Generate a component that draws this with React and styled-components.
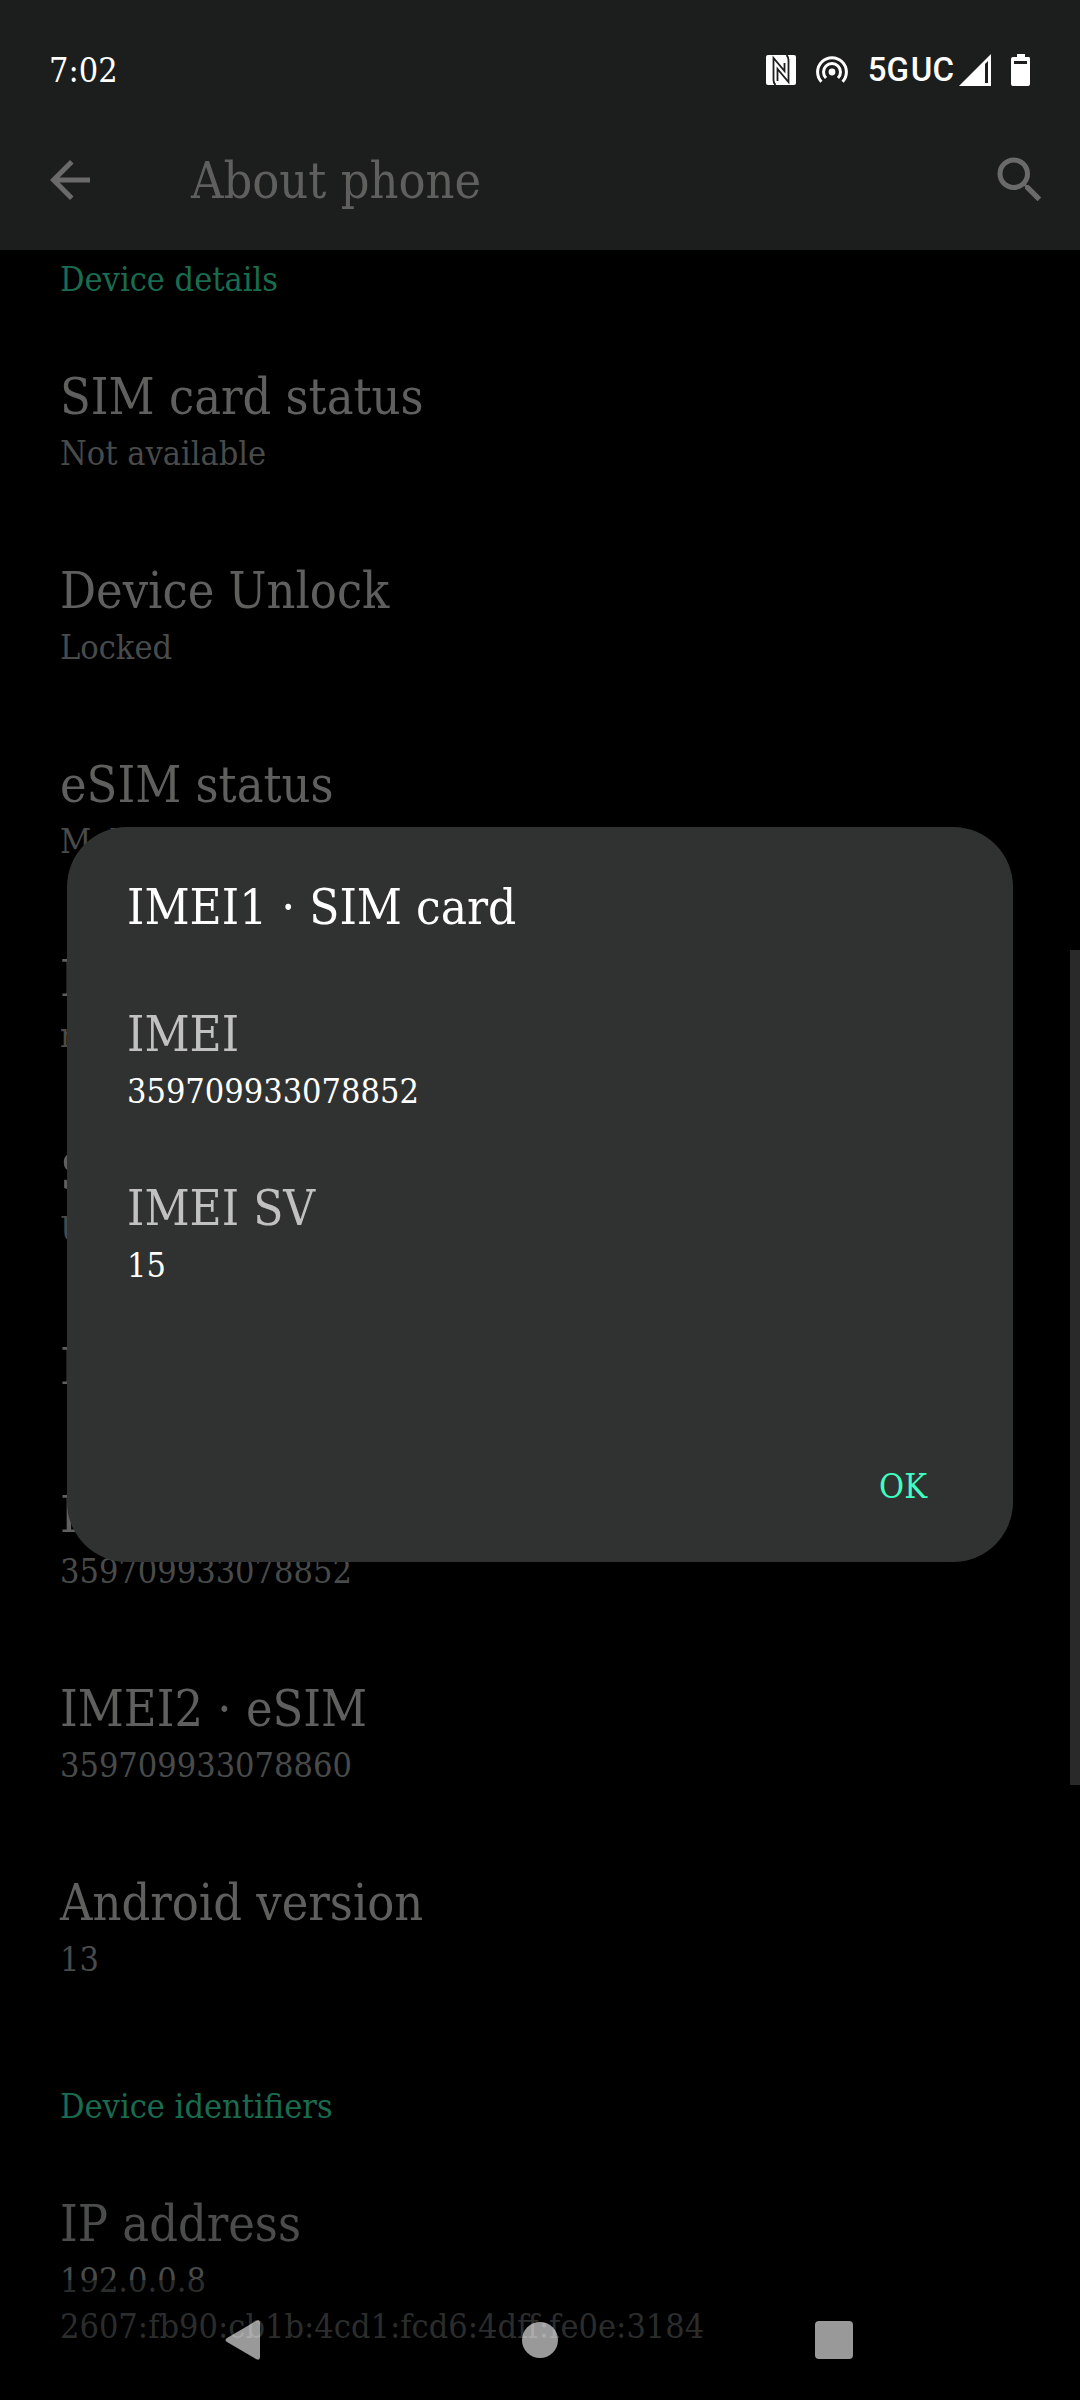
import styled, { createGlobalStyle } from "styled-components";
import { MdArrowBack, MdSearch } from "react-icons/md";

const rows = [
  { title: "SIM card status", summary: ["Not available"] },
  { title: "Device Unlock", summary: ["Locked"] },
  { title: "eSIM status", summary: ["Mobile"] },
  { title: "Model", summary: ["moto"] },
  { title: "SKU", summary: ["US"] },
  { title: "Hardware", summary: [] },
  { title: "IMEI1 · SIM card", summary: ["359709933078852"] },
  { title: "IMEI2 · eSIM", summary: ["359709933078860"] },
  { title: "Android version", summary: ["13"] },
];

const imeiInfo = [
  { label: "IMEI", value: "359709933078852" },
  { label: "IMEI SV", value: "15" },
];

const NfcIcon = () => (
  <svg width="30" height="30" viewBox="0 0 30 30">
    <rect width="30" height="30" rx="2" fill="#fff" />
    <path
      d="M9.5 30 Q7.5 28 7.5 25 V3 L18.5 16 V8 M20.5 0 Q22.5 2 22.5 5 V27 L11.5 14 V26"
      fill="none"
      stroke="#1c1e1d"
      strokeWidth="1.8"
    />
  </svg>
);

const HotspotIcon = () => (
  <svg width="32" height="28" viewBox="0 0 32 28">
    <circle cx="16" cy="16" r="3.4" fill="#fff" />
    <g fill="none" stroke="#fff" strokeWidth="3">
      <path d="M10 22 A8.5 8.5 0 1 1 22 22" />
      <path d="M5.4 25.8 A14.4 14.4 0 1 1 26.6 25.8" />
    </g>
  </svg>
);

const SignalIcon = () => (
  <svg width="32" height="32" viewBox="0 0 32 32">
    <path d="M32 0 V32 H0 Z" fill="#fff" />
    <path d="M26 10 L29 7 V29 H26 Z" fill="#1c1e1d" />
  </svg>
);

const BatteryIcon = () => (
  <svg width="20" height="32" viewBox="0 0 20 32">
    <path
      d="M6 0 H14 V3 H18 Q19 3 19 5 V30 Q19 32 17 32 H2 Q0 32 0 30 V5 Q0 3 2 3 H6 Z"
      fill="#fff"
    />
    <rect x="3" y="7" width="13" height="3" fill="#1c1e1d" />
  </svg>
);

const App = () => {
  return (
    <Page>
      <GlobalStyle />
      <TopArea>
        <StatusBar>
          <span>7:02</span>
          <StatusIcons>
            <NfcIcon />
            <HotspotIcon />
            <Network>
              <Carrier>
                <span>5G</span>
                <span>UC</span>
              </Carrier>
              <SignalIcon />
            </Network>
            <BatteryIcon />
          </StatusIcons>
        </StatusBar>
        <Toolbar>
          <IconButton aria-label="Back">
            <MdArrowBack size={60} />
          </IconButton>
          <PageTitle>About phone</PageTitle>
          <IconButton aria-label="Search">
            <MdSearch size={60} />
          </IconButton>
        </Toolbar>
      </TopArea>

      <main>
        <Category $scrolled>Device details</Category>
        {rows.map((row) => (
          <Preference key={row.title}>
            <Title>{row.title}</Title>
            {row.summary.map((line) => (
              <Summary key={line}>{line}</Summary>
            ))}
          </Preference>
        ))}
        <Category>Device identifiers</Category>
        <Preference>
          <Title $disabled>IP address</Title>
          <Summary>192.0.0.8</Summary>
          <Summary>2607:fb90:cb1b:4cd1:fcd6:4dff:fe0e:3184</Summary>
        </Preference>
      </main>

      <ScrollThumb />

      <NavBar>
        <NavButton aria-label="Back">
          <svg width="42" height="42" viewBox="0 0 42 42">
            <path
              d="M2 19 L31 2 Q35 0 35 4 V38 Q35 42 31 40 L2 23 Q-1 21 2 19 Z"
              fill="#fff"
            />
          </svg>
        </NavButton>
        <NavButton aria-label="Home">
          <svg width="36" height="36" viewBox="0 0 36 36">
            <circle cx="18" cy="18" r="18" fill="#fff" />
          </svg>
        </NavButton>
        <NavButton aria-label="Recent apps">
          <svg width="38" height="38" viewBox="0 0 38 38">
            <rect width="38" height="38" rx="4" fill="#fff" />
          </svg>
        </NavButton>
      </NavBar>

      <Overlay>
        <Dialog role="dialog" aria-labelledby="dialog-title">
          <DialogTitle id="dialog-title">IMEI1 · SIM card</DialogTitle>
          <Details>
            {imeiInfo.map((item) => (
              <div key={item.label}>
                <Label>{item.label}</Label>
                <Value>{item.value}</Value>
              </div>
            ))}
          </Details>
          <Actions>
            <OkButton>OK</OkButton>
          </Actions>
        </Dialog>
      </Overlay>
    </Page>
  );
};

export default App;

const GlobalStyle = createGlobalStyle`
  * {
    box-sizing: border-box;
  }
  body {
    margin: 0;
    background: #000;
  }
  body, button {
    font-family: "Roboto Slab", "DejaVu Serif Condensed", "DejaVu Serif", serif;
    font-size: 34px;
    line-height: 46px;
  }
  button {
    padding: 0;
    border: 0;
    background: none;
  }
  h1, h2, h3, p, dl, dd {
    margin: 0;
    font-weight: normal;
  }
  svg {
    display: block;
    flex: none;
  }
`;

const Page = styled.div`
  min-height: 100vh;
  background: #000;
`;

const TopArea = styled.header`
  background: #1c1e1d;
`;

const StatusBar = styled.div`
  display: flex;
  align-items: center;
  justify-content: space-between;
  height: 110px;
  padding: 30px 49px 0 49px;
  color: #fff;
`;

const StatusIcons = styled.div`
  display: flex;
  align-items: center;
  gap: 20px;
`;

const Network = styled.div`
  display: flex;
  align-items: center;
  gap: 5px;
`;

const Carrier = styled.div`
  display: flex;
  gap: 2px;
  font-family: Roboto, sans-serif;
  font-size: 33px;
  font-weight: 500;
`;

const Toolbar = styled.div`
  display: flex;
  align-items: center;
  height: 140px;
  padding: 0 30px 0 40px;
`;

const IconButton = styled.button`
  color: #6a6a6a;
`;

const PageTitle = styled.h1`
  flex: 1;
  padding: 2px 0 0 91px;
  color: #5f5f5e;
  font-size: 50px;
  line-height: 66px;
`;

const Category = styled.h2`
  padding: ${(props) => (props.$scrolled ? "6px" : "60px")} 60px 21px;
  color: #1a6b50;
  font-size: 34px;
  line-height: 46px;
`;

const Preference = styled.section`
  padding: 41px 60px;
`;

const Title = styled.h3`
  color: ${(props) => (props.$disabled ? "#4a4d4c" : "#5f5f5e")};
  font-size: 50px;
  line-height: 66px;
`;

const Summary = styled.p`
  color: #484b4a;
`;

const ScrollThumb = styled.div`
  position: fixed;
  top: 950px;
  right: 0;
  width: 10px;
  height: 835px;
  background: #282928;
`;

const NavBar = styled.nav`
  position: fixed;
  bottom: 0;
  left: 0;
  right: 0;
  display: flex;
  align-items: center;
  justify-content: center;
  height: 120px;
  background: rgba(0, 0, 0, 0.4);
`;

const NavButton = styled.button`
  display: flex;
  justify-content: center;
  width: 294px;
  opacity: 0.6;
`;

const Overlay = styled.div`
  position: fixed;
  inset: 0;
  display: flex;
  align-items: center;
  padding: 109px 67px 120px;
`;

const Dialog = styled.div`
  flex: 1;
  padding: 48px 60px 53px;
  border-radius: 60px;
  background: #303231;
`;

const DialogTitle = styled.h2`
  color: #fff;
  font-size: 49px;
  line-height: 66px;
`;

const Details = styled.dl`
  display: flex;
  flex-direction: column;
  gap: 62px;
  padding: 61px 0 175px;
`;

const Label = styled.dt`
  color: #c1c1c1;
  font-size: 49px;
  line-height: 66px;
`;

const Value = styled.dd`
  color: #fff;
`;

const Actions = styled.div`
  display: flex;
  justify-content: flex-end;
  padding-right: 26px;
`;

const OkButton = styled.button`
  color: #3dffc0;
`;
